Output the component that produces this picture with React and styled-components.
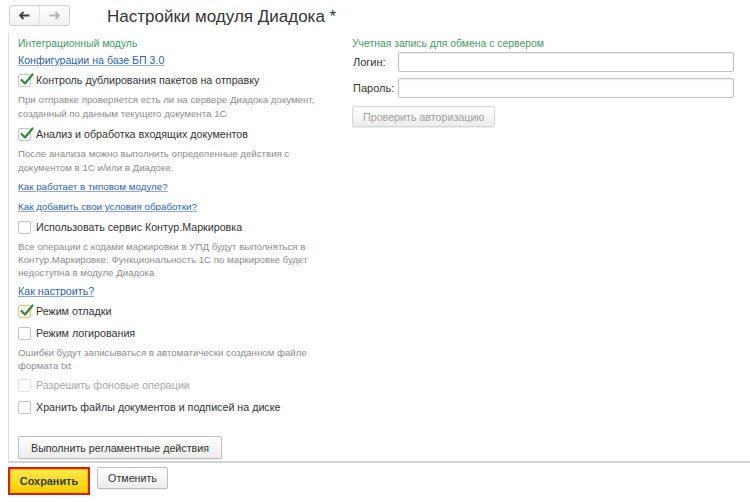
import styled, { createGlobalStyle } from 'styled-components';

const GlobalStyle = createGlobalStyle`
    body {
        margin: 0;
        background: #fff;
        font-family: "Liberation Sans", Arial, sans-serif;
        color: #333;
    }
`;

const Page = styled.div`
    width: 750px;
    height: 502px;
    overflow: hidden;
    background: #fff;
`;

const Header = styled.div`
    display: flex;
    align-items: flex-start;
    height: 33px;
    padding-left: 9px;
    box-sizing: border-box;
`;

const NavGroup = styled.div`
    display: flex;
    margin-top: 5px;
    height: 21px;
    border: 1px solid #cfcfcf;
    border-radius: 3px;
    box-sizing: border-box;
    background: linear-gradient(#ffffff, #f1f1f1);
`;

const NavButton = styled.div`
    width: 29px;
    display: flex;
    align-items: center;
    justify-content: center;
    color: ${p => (p.$disabled ? '#b5b5b5' : '#404040')};
    & + & {
        border-left: 1px solid #e2e2e2;
    }
`;

const Title = styled.h1`
    margin: 6px 0 0 37px;
    font-size: 17px;
    font-weight: normal;
    line-height: 22px;
    color: #333;
`;

const Panel = styled.div`
    display: flex;
    margin-left: 8px;
    height: 430px;
    box-sizing: border-box;
    border-left: 1px solid #dcdcdc;
    border-bottom: 2px solid #d4d4d4;
    padding: 4px 0 0 9px;
`;

const LeftColumn = styled.div`
    width: 334px;
    display: flex;
    flex-direction: column;
    gap: 4px;
`;

const RightColumn = styled.div`
    width: 382px;
    display: flex;
    flex-direction: column;
`;

const GroupTitle = styled.div`
    font-size: 10.4px;
    line-height: 14px;
    color: #3f9a5e;
`;

const Link = styled.a`
    font-size: ${p => p.$size || 9.8}px;
    line-height: 14px;
    color: #2d5fb0;
    text-decoration: underline;
    text-decoration-color: #8fa8d6;
    margin-top: ${p => p.$mt || 0}px;
    cursor: pointer;
    align-self: flex-start;
`;

const CheckRow = styled.label`
    display: flex;
    align-items: center;
    height: 18px;
    gap: 5px;
    font-size: 10.7px;
    color: ${p => (p.$disabled ? '#a8a8a8' : '#333')};
`;

const Box = styled.span`
    position: relative;
    width: 13px;
    height: 13px;
    box-sizing: border-box;
    border: 1px solid ${p => (p.$focus ? '#e9c46f' : p.$disabled ? '#e3e3e3' : '#c4c4c4')};
    border-radius: 2px;
    background: #fff;
    flex: none;

    & svg {
        position: absolute;
        left: 1px;
        top: -2px;
    }
`;

const Desc = styled.div`
    font-size: 9.7px;
    line-height: ${p => p.$lh || 14}px;
    color: #8c8c8c;
    white-space: nowrap;
`;

const Button = styled.button`
    align-self: flex-start;
    height: ${p => p.$h || 23}px;
    padding: 0 ${p => p.$px || 10}px;
    font-family: "Liberation Sans", Arial, sans-serif;
    font-size: 10.7px;
    color: ${p => (p.$disabled ? '#a0a0a0' : '#333')};
    border: 1px solid ${p => (p.$disabled ? '#d6d6d6' : '#bfbfbf')};
    border-radius: 2px;
    background: linear-gradient(#ffffff, #ececec);
    box-shadow: 0 1px 1px rgba(0, 0, 0, 0.08);
    margin-top: ${p => p.$mt || 0}px;
`;

const FieldRow = styled.div`
    display: flex;
    align-items: center;
    height: 20px;
    margin-top: ${p => p.$mt || 0}px;
`;

const FieldLabel = styled.span`
    width: 45px;
    font-size: 11px;
    color: #333;
    padding-left: 1px;
`;

const Input = styled.input`
    flex: 1;
    height: 20px;
    box-sizing: border-box;
    border: 1px solid #c2c2c2;
    border-radius: 2px;
    box-shadow: inset 0 1px 2px rgba(0, 0, 0, 0.08);
`;

const Footer = styled.div`
    display: flex;
    align-items: center;
    gap: 7px;
    padding: 4px 0 0 8px;
`;

const SaveButton = styled.button`
    width: 82px;
    height: 28px;
    border: 2px solid #d61f1f;
    background: linear-gradient(#ffe94a, #f4cf00);
    box-shadow: inset 0 0 0 1px #e6b800;
    font-family: "Liberation Sans", Arial, sans-serif;
    font-size: 10.9px;
    font-weight: bold;
    color: #3a3a3a;
`;

const CancelButton = styled(Button)`
    width: 71px;
    padding: 0;
`;

const Tick = () => (
    <svg width="14" height="13" viewBox="0 0 14 13">
        <path d="M1.5 7 L5 10.5 L12.5 1.5" fill="none" stroke="#2f8a3c" strokeWidth="2.2" strokeLinecap="round" strokeLinejoin="round" />
    </svg>
);

const Arrow = ({ dir }) => (
    <svg width="11" height="9" viewBox="0 0 11 9" style={{ transform: dir === 'right' ? 'scaleX(-1)' : 'none' }}>
        <path d="M1 4.5 H10.5 M4.5 1 L1 4.5 L4.5 8" fill="none" stroke="currentColor" strokeWidth="1.8" />
    </svg>
);

const Check = ({ checked, focus, disabled, children }) => (
    <CheckRow $disabled={disabled}>
        <Box $focus={focus} $disabled={disabled}>{checked && <Tick />}</Box>
        {children}
    </CheckRow>
);

export default function App() {
    return (
        <Page>
            <GlobalStyle />
            <Header>
                <NavGroup>
                    <NavButton><Arrow dir="left" /></NavButton>
                    <NavButton $disabled><Arrow dir="right" /></NavButton>
                </NavGroup>
                <Title>Настройки модуля Диадока *</Title>
            </Header>

            <Panel>
                <LeftColumn>
                    <GroupTitle>Интеграционный модуль</GroupTitle>
                    <Link $size={10.6} style={{ marginTop: -2 }}>Конфигурации на базе БП 3.0</Link>
                    <Check checked>Контроль дублирования пакетов на отправку</Check>
                    <Desc>
                        При отправке проверяется есть ли на сервере Диадока документ,<br />
                        созданный по данным текущего документа 1С
                    </Desc>
                    <Check checked>Анализ и обработка входящих документов</Check>
                    <Desc>
                        После анализа можно выполнить определенные действия с<br />
                        документом в 1С и/или в Диадоке.
                    </Desc>
                    <Link $mt={1}>Как работает в типовом модуле?</Link>
                    <Link $mt={2}>Как добавить свои условия обработки?</Link>
                    <Check>Использовать сервис Контур.Маркировка</Check>
                    <Desc $lh={13}>
                        Все операции с кодами маркировки в УПД будут выполняться в<br />
                        Контур.Маркировке. Функциональность 1С по маркировке будет<br />
                        недоступна в модуле Диадока
                    </Desc>
                    <Link $size={10.7} $mt={1}>Как настроить?</Link>
                    <Check checked focus>Режим отладки</Check>
                    <Check>Режим логирования</Check>
                    <Desc $lh={13}>
                        Ошибки будут записываться в автоматически созданном файле<br />
                        формата txt
                    </Desc>
                    <Check disabled>Разрешить фоновые операции</Check>
                    <Check>Хранить файлы документов и подписей на диске</Check>
                    <Button $mt={16} $px={12}>Выполнить регламентные действия</Button>
                </LeftColumn>

                <RightColumn>
                    <GroupTitle>Учетная запись для обмена с сервером</GroupTitle>
                    <FieldRow $mt={1}>
                        <FieldLabel>Логин:</FieldLabel>
                        <Input />
                    </FieldRow>
                    <FieldRow $mt={6}>
                        <FieldLabel>Пароль:</FieldLabel>
                        <Input />
                    </FieldRow>
                    <Button $mt={8} $h={21} $px={10} $disabled>Проверить авторизацию</Button>
                </RightColumn>
            </Panel>

            <Footer>
                <SaveButton>Сохранить</SaveButton>
                <CancelButton $h={22}>Отменить</CancelButton>
            </Footer>
        </Page>
    );
}
